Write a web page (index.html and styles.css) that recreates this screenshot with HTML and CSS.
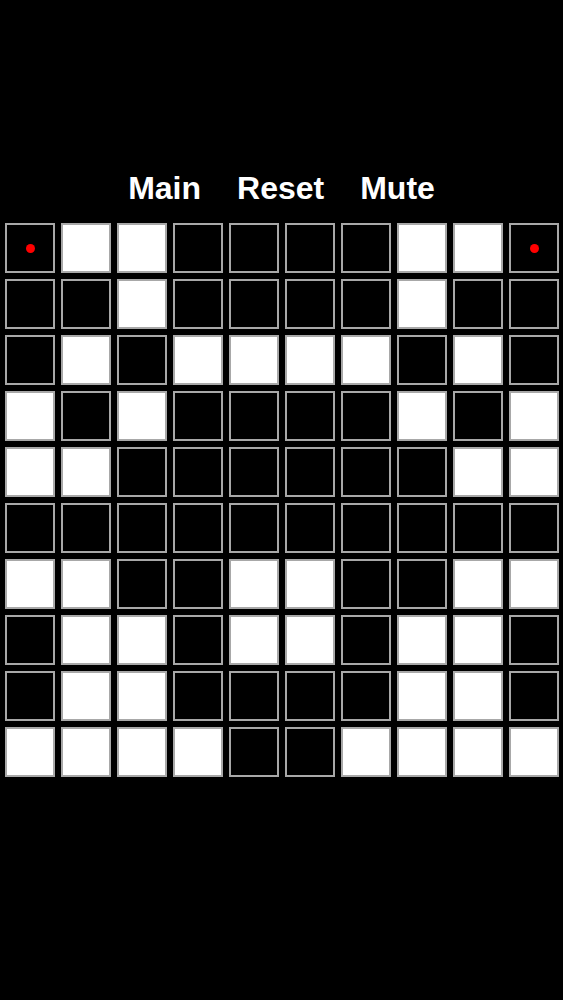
FILE: index.html
```html
<!DOCTYPE html>
<html>
<head>
<meta charset="utf-8">
<link rel="stylesheet" href="styles.css">
</head>
<body>
<div class="page">
  <nav class="menu">
    <span class="item">Main</span>
    <span class="item">Reset</span>
    <span class="item">Mute</span>
  </nav>
  <div class="board">
    <div class="cell dot"></div><div class="cell w"></div><div class="cell w"></div><div class="cell"></div><div class="cell"></div><div class="cell"></div><div class="cell"></div><div class="cell w"></div><div class="cell w"></div><div class="cell dot"></div>
    <div class="cell"></div><div class="cell"></div><div class="cell w"></div><div class="cell"></div><div class="cell"></div><div class="cell"></div><div class="cell"></div><div class="cell w"></div><div class="cell"></div><div class="cell"></div>
    <div class="cell"></div><div class="cell w"></div><div class="cell"></div><div class="cell w"></div><div class="cell w"></div><div class="cell w"></div><div class="cell w"></div><div class="cell"></div><div class="cell w"></div><div class="cell"></div>
    <div class="cell w"></div><div class="cell"></div><div class="cell w"></div><div class="cell"></div><div class="cell"></div><div class="cell"></div><div class="cell"></div><div class="cell w"></div><div class="cell"></div><div class="cell w"></div>
    <div class="cell w"></div><div class="cell w"></div><div class="cell"></div><div class="cell"></div><div class="cell"></div><div class="cell"></div><div class="cell"></div><div class="cell"></div><div class="cell w"></div><div class="cell w"></div>
    <div class="cell"></div><div class="cell"></div><div class="cell"></div><div class="cell"></div><div class="cell"></div><div class="cell"></div><div class="cell"></div><div class="cell"></div><div class="cell"></div><div class="cell"></div>
    <div class="cell w"></div><div class="cell w"></div><div class="cell"></div><div class="cell"></div><div class="cell w"></div><div class="cell w"></div><div class="cell"></div><div class="cell"></div><div class="cell w"></div><div class="cell w"></div>
    <div class="cell"></div><div class="cell w"></div><div class="cell w"></div><div class="cell"></div><div class="cell w"></div><div class="cell w"></div><div class="cell"></div><div class="cell w"></div><div class="cell w"></div><div class="cell"></div>
    <div class="cell"></div><div class="cell w"></div><div class="cell w"></div><div class="cell"></div><div class="cell"></div><div class="cell"></div><div class="cell"></div><div class="cell w"></div><div class="cell w"></div><div class="cell"></div>
    <div class="cell w"></div><div class="cell w"></div><div class="cell w"></div><div class="cell w"></div><div class="cell"></div><div class="cell"></div><div class="cell w"></div><div class="cell w"></div><div class="cell w"></div><div class="cell w"></div>
  </div>
</div>
</body>
</html>
```

FILE: styles.css
```css
html, body {
  margin: 0;
  padding: 0;
  background: #000;
}
.page {
  width: 563px;
  height: 1000px;
  background: #000;
  padding-top: 168px;
  box-sizing: border-box;
}
.menu {
  display: flex;
  justify-content: center;
  gap: 36px;
  height: 40px;
  align-items: center;
  margin-bottom: 15px;
}
.item {
  font-family: "Liberation Sans", Arial, sans-serif;
  font-weight: bold;
  font-size: 32px;
  line-height: 40px;
  color: #fff;
}
.board {
  display: grid;
  grid-template-columns: repeat(10, 50px);
  grid-auto-rows: 50px;
  gap: 6px;
  padding-left: 5px;
}
.cell {
  box-sizing: border-box;
  border: 2px solid #a8a8a8;
  background: #000;
  position: relative;
}
.cell.w {
  background: #fff;
}
.cell.dot::after {
  content: "";
  position: absolute;
  left: 50%;
  top: 50%;
  width: 9px;
  height: 9px;
  margin: -4.5px 0 0 -4.5px;
  border-radius: 50%;
  background: #f00;
}
```
